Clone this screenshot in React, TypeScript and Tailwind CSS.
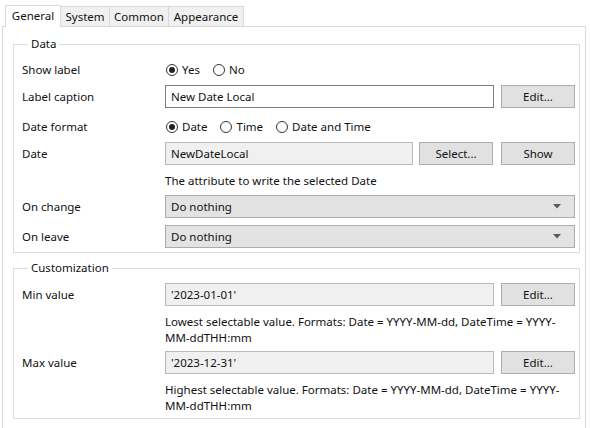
import React from 'react';

type RadioProps = { checked?: boolean; label: string };

function Radio({ checked, label }: RadioProps) {
  return (
    <span className="flex items-center gap-[4px]">
      <span className="w-[12px] h-[12px] rounded-full border border-[#333333] bg-white flex items-center justify-center">
        {checked && <span className="w-[6px] h-[6px] rounded-full bg-[#222222]" />}
      </span>
      <span>{label}</span>
    </span>
  );
}

function Row({ label, children }: { label?: string; children: React.ReactNode }) {
  return (
    <div className="flex items-center">
      <div className="w-[143px] shrink-0">{label}</div>
      {children}
    </div>
  );
}

function Button({ children, className = 'w-[74px]' }: { children: React.ReactNode; className?: string }) {
  return (
    <div className={`h-[23px] shrink-0 flex items-center justify-center bg-[#e1e1e1] border border-[#adadad] ${className}`}>
      {children}
    </div>
  );
}

function TextBox({ value, readOnly }: { value: string; readOnly?: boolean }) {
  return (
    <div
      className={`h-[23px] flex-1 flex items-center pl-[5px] border ${
        readOnly ? 'bg-[#f0f0f0] border-[#b9b9b9]' : 'bg-white border-[#7a7a7a]'
      }`}
    >
      {value}
    </div>
  );
}

function Dropdown({ value }: { value: string }) {
  return (
    <div className="h-[23px] flex-1 flex items-center justify-between pl-[5px] pr-[13px] bg-[#e3e3e3] border border-[#acacac]">
      <span>{value}</span>
      <svg width="8" height="5" viewBox="0 0 8 5">
        <path d="M0 0 H8 L4 4.5 Z" fill="#5a5a5a" />
      </svg>
    </div>
  );
}

function Group({ title, children, className = '' }: { title: string; children: React.ReactNode; className?: string }) {
  return (
    <fieldset className={`border border-[#dcdcdc] pl-[8px] pr-[4px] ${className}`}>
      <legend className="ml-[6px] px-[3px] leading-[16px]">{title}</legend>
      {children}
    </fieldset>
  );
}

export default function App() {
  const tabs = [
    { name: 'System', w: 'w-[50px]' },
    { name: 'Common', w: 'w-[60px]' },
    { name: 'Appearance', w: 'w-[76px]' },
  ];

  return (
    <div className="w-[590px] h-[428px] overflow-hidden bg-white text-[11.5px] leading-[16px] text-[#111111] font-['Noto_Sans',sans-serif]">
      {/* tab strip */}
      <div className="flex items-end h-[26px] pl-[5px]">
        <div className="relative z-10 w-[56px] h-[22px] -mb-px bg-white border border-b-0 border-[#d9d9d9] flex items-center justify-center pb-[2px]">
          General
        </div>
        {tabs.map((t) => (
          <div
            key={t.name}
            className={`${t.w} h-[20px] -ml-px bg-[#f0f0f0] border border-b-0 border-[#d9d9d9] flex items-center justify-center`}
          >
            {t.name}
          </div>
        ))}
      </div>

      {/* tab page */}
      <div className="ml-[2px] w-[584px] h-[420px] border border-[#d9d9d9] pt-[9px] pl-[10px] pr-[5px]">
        <Group title="Data" className="pb-[4px]">
          <div className="mt-[7px]">
            <Row label="Show label">
              <div className="h-[22px] flex items-center gap-[13px] pl-[1px]">
                <Radio checked label="Yes" />
                <Radio label="No" />
              </div>
            </Row>
          </div>
          <div className="mt-[4px]">
            <Row label="Label caption">
              <TextBox value="New Date Local" />
              <Button className="w-[74px] ml-[7px]">Edit...</Button>
            </Row>
          </div>
          <div className="mt-[8px]">
            <Row label="Date format">
              <div className="h-[22px] flex items-center gap-[13px] pl-[1px]">
                <Radio checked label="Date" />
                <Radio label="Time" />
                <Radio label="Date and Time" />
              </div>
            </Row>
          </div>
          <div className="mt-[4px]">
            <Row label="Date">
              <TextBox value="NewDateLocal" readOnly />
              <Button className="w-[74px] ml-[6px]">Select...</Button>
              <Button className="w-[74px] ml-[8px]">Show</Button>
            </Row>
          </div>
          <div className="mt-[8px]">
            <Row>
              <span>The attribute to write the selected Date</span>
            </Row>
          </div>
          <div className="mt-[6px]">
            <Row label="On change">
              <Dropdown value="Do nothing" />
            </Row>
          </div>
          <div className="mt-[7px]">
            <Row label="On leave">
              <Dropdown value="Do nothing" />
            </Row>
          </div>
        </Group>

        <Group title="Customization" className="mt-[7px] pb-[4px]">
          <div className="mt-[7px]">
            <Row label="Min value">
              <TextBox value="'2023-01-01'" readOnly />
              <Button className="w-[74px] ml-[7px]">Edit...</Button>
            </Row>
          </div>
          <div className="mt-[8px]">
            <Row>
              <span className="whitespace-nowrap">
                Lowest selectable value. Formats: Date = YYYY-MM-dd, DateTime = YYYY-
                <br />
                MM-ddTHH:mm
              </span>
            </Row>
          </div>
          <div className="mt-[5px]">
            <Row label="Max value">
              <TextBox value="'2023-12-31'" readOnly />
              <Button className="w-[74px] ml-[7px]">Edit...</Button>
            </Row>
          </div>
          <div className="mt-[8px]">
            <Row>
              <span className="whitespace-nowrap">
                Highest selectable value. Formats: Date = YYYY-MM-dd, DateTime = YYYY-
                <br />
                MM-ddTHH:mm
              </span>
            </Row>
          </div>
        </Group>
      </div>
    </div>
  );
}
